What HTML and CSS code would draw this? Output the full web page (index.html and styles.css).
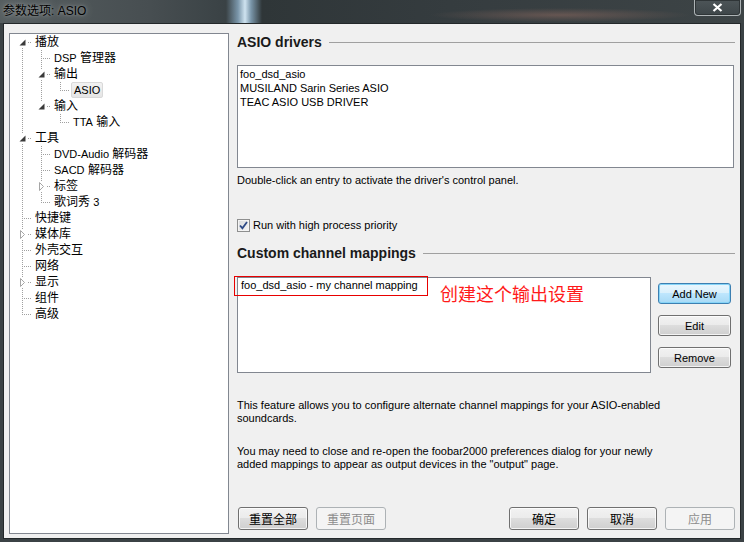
FILE: index.html
```html
<!DOCTYPE html>
<html lang="zh-CN">
<head>
    <meta charset="UTF-8">
    <title>参数选项: ASIO</title>
    <link rel="stylesheet" href="styles.css">
</head>
<body>
<div class="window">
    <div class="titlebar">
        <span class="title">参数选项: ASIO</span>
        <div class="close-btn">
            <svg width="11" height="9" viewBox="0 0 11 9"><path d="M1.5 1L9.5 8M9.5 1L1.5 8" stroke="#fff" stroke-width="2.2" fill="none"/></svg>
        </div>
    </div>
    <div class="frame">
        <div class="client">
            <div class="tree">
                <div class="row"><i class="c start"><svg class="exp" width="9" height="9"><path d="M7.5 1.5V7.5H1.5Z" fill="#3a3a3a"/></svg></i><span class="lbl">播放</span></div>
                <div class="row"><i class="c pipe"></i><i class="c tee"></i><span class="lbl"><span class="lat">DSP</span> 管理器</span></div>
                <div class="row"><i class="c pipe"></i><i class="c tee"><svg class="exp" width="9" height="9"><path d="M7.5 1.5V7.5H1.5Z" fill="#3a3a3a"/></svg></i><span class="lbl">输出</span></div>
                <div class="row"><i class="c pipe"></i><i class="c pipe"></i><i class="c end"></i><span class="lbl sel"><span class="lat">ASIO</span></span></div>
                <div class="row"><i class="c pipe"></i><i class="c end"><svg class="exp" width="9" height="9"><path d="M7.5 1.5V7.5H1.5Z" fill="#3a3a3a"/></svg></i><span class="lbl">输入</span></div>
                <div class="row"><i class="c pipe"></i><i class="c"></i><i class="c end"></i><span class="lbl"><span class="lat">TTA</span> 输入</span></div>
                <div class="row"><i class="c tee"><svg class="exp" width="9" height="9"><path d="M7.5 1.5V7.5H1.5Z" fill="#3a3a3a"/></svg></i><span class="lbl">工具</span></div>
                <div class="row"><i class="c pipe"></i><i class="c tee"></i><span class="lbl"><span class="lat">DVD-Audio</span> 解码器</span></div>
                <div class="row"><i class="c pipe"></i><i class="c tee"></i><span class="lbl"><span class="lat">SACD</span> 解码器</span></div>
                <div class="row"><i class="c pipe"></i><i class="c tee"><svg class="exp" width="9" height="9"><path d="M2.5 0.5L6.5 4.5L2.5 8.5Z" fill="#fff" stroke="#a6a6a6"/></svg></i><span class="lbl">标签</span></div>
                <div class="row"><i class="c pipe"></i><i class="c end"></i><span class="lbl">歌词秀 <span class="lat">3</span></span></div>
                <div class="row"><i class="c tee"></i><span class="lbl">快捷键</span></div>
                <div class="row"><i class="c tee"><svg class="exp" width="9" height="9"><path d="M2.5 0.5L6.5 4.5L2.5 8.5Z" fill="#fff" stroke="#a6a6a6"/></svg></i><span class="lbl">媒体库</span></div>
                <div class="row"><i class="c tee"></i><span class="lbl">外壳交互</span></div>
                <div class="row"><i class="c tee"></i><span class="lbl">网络</span></div>
                <div class="row"><i class="c tee"><svg class="exp" width="9" height="9"><path d="M2.5 0.5L6.5 4.5L2.5 8.5Z" fill="#fff" stroke="#a6a6a6"/></svg></i><span class="lbl">显示</span></div>
                <div class="row"><i class="c tee"></i><span class="lbl">组件</span></div>
                <div class="row"><i class="c end"></i><span class="lbl">高级</span></div>
            </div>

            <div class="page">
                <div class="sec">ASIO drivers</div>
                <div class="list drivers">
                    <div class="item">foo_dsd_asio</div>
                    <div class="item">MUSILAND Sarin Series ASIO</div>
                    <div class="item">TEAC ASIO USB DRIVER</div>
                </div>
                <div class="hint">Double-click an entry to activate the driver's control panel.</div>

                <div class="check-row">
                    <span class="checkbox">
                        <svg width="9" height="9" viewBox="0 0 9 9"><path d="M1 4.5L3.4 7.2L8 1" stroke="#2e4a86" stroke-width="1.8" fill="none"/></svg>
                    </span>
                    Run with high process priority
                </div>

                <div class="sec sec-2">Custom channel mappings</div>
                <div class="map-row">
                    <div class="list mappings">
                        <div class="item">foo_dsd_asio - my channel mapping</div>
                        <div class="mark"></div>
                        <div class="note">创建这个输出设置</div>
                    </div>
                    <div class="side-btns">
                        <div class="btn default">Add New</div>
                        <div class="btn">Edit</div>
                        <div class="btn">Remove</div>
                    </div>
                </div>

                <p class="desc first">This feature allows you to configure alternate channel mappings for your ASIO-enabled<br>soundcards.</p>
                <p class="desc">You may need to close and re-open the foobar2000 preferences dialog for your newly<br>added mappings to appear as output devices in the "output" page.</p>

                <div class="bottom-btns">
                    <div class="btn big">重置全部</div>
                    <div class="btn big disabled">重置页面</div>
                    <div class="spacer"></div>
                    <div class="btn big">确定</div>
                    <div class="btn big">取消</div>
                    <div class="btn big disabled">应用</div>
                </div>
            </div>
        </div>
    </div>
</div>
</body>
</html>
```

FILE: styles.css
```css
body {
    margin: 0;
    width: 744px;
    height: 542px;
    overflow: hidden;
    background-color: #3b4245;
    font-family: "Liberation Sans", "Noto Sans CJK SC", sans-serif;
}
.window {
    display: flex;
    flex-direction: column;
    height: 542px;
}
.titlebar {
    height: 23px;
    display: flex;
    justify-content: space-between;
    align-items: flex-start;
    background:
        radial-gradient(ellipse 130px 7px at 560px 15px, rgba(140, 105, 95, 0.55), transparent),
        linear-gradient(to right, #555d5f 0, #474e51 150px, #3a4245 226px, #7a96aa 238px, #cfe3f0 245px, #7a96aa 251px, #2f3638 262px, #353c3f 450px, #3d4446 744px);
}
.title {
    margin: 3px 0 0 3px;
    font-size: 12px;
    line-height: 16px;
    color: #000;
    text-shadow: 0 0 8px rgba(255, 255, 255, 0.45), 0 0 3px rgba(255, 255, 255, 0.35);
}
.close-btn {
    width: 47px;
    height: 16px;
    box-sizing: border-box;
    margin-right: 3px;
    border: 1px solid #aeb4b6;
    border-top: none;
    border-radius: 0 0 4px 4px;
    box-shadow: inset 0 0 0 1px #2f3537;
    background: linear-gradient(#4d5558, #3e4649);
    display: flex;
    align-items: center;
    justify-content: center;
}
.frame {
    flex: 1;
    display: flex;
    padding: 0 3px 3px 3px;
}
.client {
    flex: 1;
    display: flex;
    gap: 8px;
    padding: 9px 5px 4px 5px;
    background-color: #f0f0f0;
    border: 1px solid #23282a;
}

/* tree */
.tree {
    width: 220px;
    box-sizing: border-box;
    border: 1px solid #828790;
    background-color: #fff;
    padding-left: 3px;
    --v: repeating-linear-gradient(to bottom, #a0a0a0 0 1px, transparent 1px 2px);
    --h: repeating-linear-gradient(to right, #a0a0a0 0 1px, transparent 1px 2px);
}
.row {
    display: flex;
    height: 16px;
    align-items: center;
}
.c {
    width: 19px;
    height: 16px;
    flex: none;
    display: flex;
    align-items: center;
    justify-content: center;
    background-repeat: no-repeat;
}
.c.pipe {
    background-image: var(--v);
    background-size: 1px 16px;
    background-position: 9px 0;
}
.c.tee {
    background-image: var(--v), var(--h);
    background-size: 1px 16px, 10px 1px;
    background-position: 9px 0, 9px 8px;
}
.c.end {
    background-image: var(--v), var(--h);
    background-size: 1px 9px, 10px 1px;
    background-position: 9px 0, 9px 8px;
}
.c.start {
    background-image: var(--v), var(--h);
    background-size: 1px 8px, 10px 1px;
    background-position: 9px 8px, 9px 8px;
}
.exp {
    background-color: #fff;
}
.lbl {
    margin-left: 3px;
    font-size: 12px;
    line-height: 14px;
    color: #000;
    white-space: nowrap;
}
.lat {
    font-size: 11px;
}
.lbl.sel {
    margin-left: 1px;
    padding: 0 2px;
    border: 1px solid #d9d9d9;
    border-radius: 2px;
    background: linear-gradient(#f2f2f2, #e5e5e5);
}

/* right page */
.page {
    width: 498px;
    display: flex;
    flex-direction: column;
    font-size: 11px;
    color: #000;
}
.sec {
    display: flex;
    align-items: center;
    gap: 7px;
    height: 18px;
    font-size: 14px;
    font-weight: bold;
    color: #1a1a1a;
}
.sec::after {
    content: "";
    flex: 1;
    border-top: 1px solid #a0a0a0;
}
.sec-2 {
    margin-top: 12px;
}
.list {
    box-sizing: border-box;
    border: 1px solid #828790;
    background-color: #fff;
}
.drivers {
    width: 497px;
    height: 103px;
    margin-top: 14px;
    padding: 1px 2px;
}
.item {
    line-height: 14px;
    white-space: nowrap;
}
.hint {
    margin-top: 5px;
    line-height: 14px;
}
.check-row {
    margin-top: 31px;
    height: 14px;
    display: flex;
    align-items: center;
    gap: 3px;
}
.checkbox {
    width: 13px;
    height: 13px;
    box-sizing: border-box;
    border: 1px solid #8e8f8f;
    background: linear-gradient(135deg, #d8dadc, #f6f6f6);
    box-shadow: inset 0 0 0 1px #f4f4f4;
    display: flex;
    align-items: center;
    justify-content: center;
}
.map-row {
    margin-top: 15px;
    display: flex;
    gap: 7px;
}
.mappings {
    position: relative;
    width: 414px;
    height: 96px;
    padding: 0 3px;
}
.mark {
    position: absolute;
    left: -4px;
    top: -2px;
    width: 194px;
    height: 20px;
    box-sizing: border-box;
    border: 1px solid #e80000;
}
.note {
    position: absolute;
    left: 202px;
    top: 7px;
    font-size: 18px;
    line-height: 20px;
    color: #ff1a1a;
    white-space: nowrap;
}
.side-btns {
    display: flex;
    flex-direction: column;
    gap: 11px;
    padding-top: 6px;
}
.btn {
    width: 73px;
    height: 21px;
    box-sizing: border-box;
    border: 1px solid #707070;
    border-radius: 3px;
    background: linear-gradient(#f2f2f2 0%, #ebebeb 49%, #dddddd 50%, #cfcfcf 100%);
    box-shadow: inset 0 0 0 1px rgba(255, 255, 255, 0.75);
    display: flex;
    align-items: center;
    justify-content: center;
    font-size: 11px;
    color: #000;
}
.btn.default {
    border-color: #3c7fb1;
    background: linear-gradient(#eaf6fd 0%, #d9f0fc 49%, #bee6fd 50%, #a7d9f5 100%);
    box-shadow: inset 0 0 0 1px #86d4f7;
}
.desc {
    margin: 20px 0 0 0;
    line-height: 13px;
}
.desc.first {
    margin-top: 26px;
}
.bottom-btns {
    margin-top: auto;
    margin-bottom: 4px;
    padding-left: 1px;
    display: flex;
    gap: 8px;
}
.spacer {
    flex: 1;
}
.btn.big {
    width: 70px;
    height: 23px;
    font-size: 12px;
}
.btn.disabled {
    border-color: #adb2b5;
    background: #f4f4f4;
    box-shadow: none;
    color: #8d8d8d;
}
```
